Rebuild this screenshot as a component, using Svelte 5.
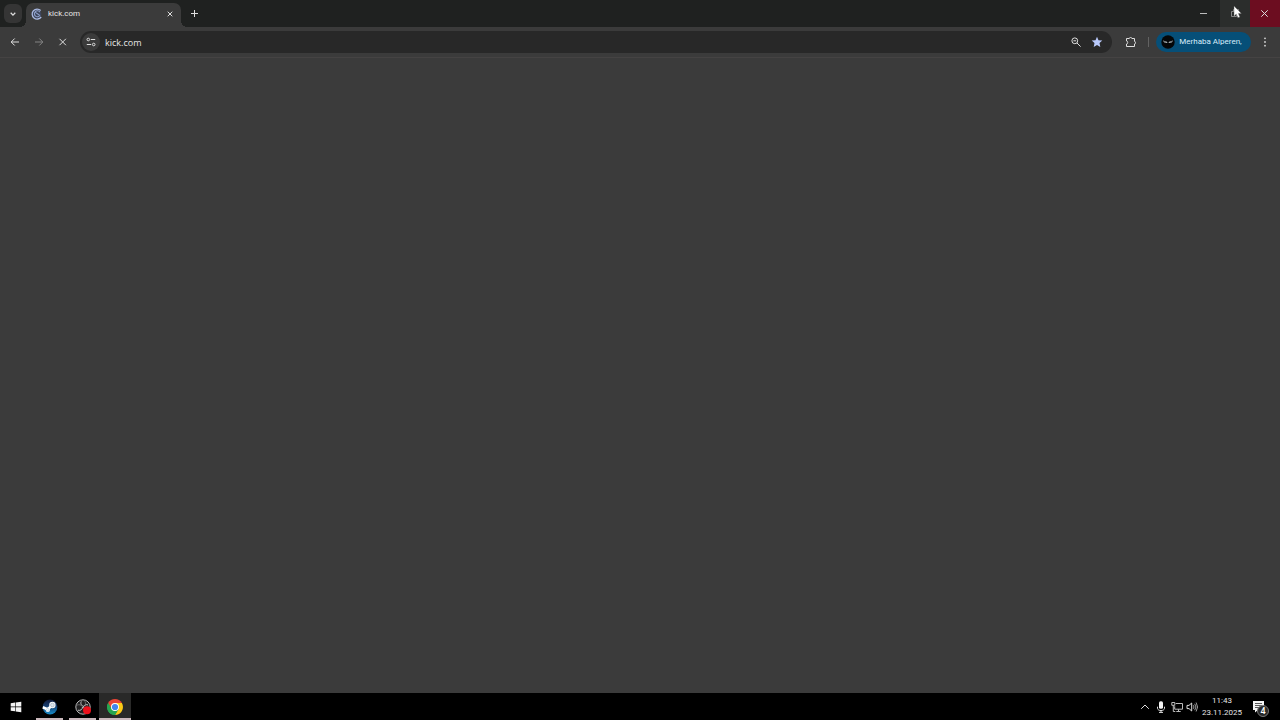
<script lang="ts">
  let address = $state('kick.com');
</script>

<div class="screen">
  <header class="titlebar">
    <button class="search-tabs" aria-label="Search tabs">
      <svg width="8" height="8" viewBox="0 0 8 8"><path d="M1.7 2.8 4 5.1 6.3 2.8" class="line bold" /></svg>
    </button>
    <div class="tab">
      <svg width="12" height="12" viewBox="0 0 12 12">
        <circle cx="6" cy="6" r="4.4" fill="#3c455c" />
        <path d="M10.2 9A5 5 0 1 1 9.7 2.5" fill="none" stroke="#a9b9e2" stroke-width="1.3" />
        <path d="M8.9 4.1A3 3 0 1 0 9 7.3M4.4 4.4 8.6 7.2" fill="none" stroke="#8fa0ca" stroke-width="1.1" />
      </svg>
      <span class="tab-title">kick.com</span>
      <button class="icon tab-close" aria-label="Close tab">
        <svg width="8" height="8" viewBox="0 0 8 8"><path d="m1.7 1.7 4.6 4.6m0-4.6L1.7 6.3" class="line" /></svg>
      </button>
    </div>
    <button class="icon new-tab" aria-label="New tab">
      <svg width="10" height="10" viewBox="0 0 10 10"><path d="M4.5 1v7M1 4.5h7" class="line" /></svg>
    </button>
    <div class="window-controls">
      <button class="minimize" aria-label="Minimize"><svg width="10" height="10" viewBox="0 0 10 10"><path d="M1 4.5h7" class="line soft" /></svg></button>
      <button class="restore" aria-label="Restore">
        <svg width="10" height="10" viewBox="0 0 10 10"><path d="M1.5 2.5h5v5h-5zM3.5 2.5v-2h5v5h-2" class="line dim" /></svg>
        <svg class="pointer" width="9" height="14" viewBox="0 0 9 14"><path d="M1 0v10.2l2.3-2.1 1.6 3.7 2-.9-1.6-3.5h3.1z" fill="#fff" stroke="#555" stroke-width=".4" /></svg>
      </button>
      <button class="close" aria-label="Close window"><svg width="10" height="10" viewBox="0 0 10 10"><path d="m1.3 1.3 6.4 6.4m0-6.4L1.3 7.7" class="line" /></svg></button>
    </div>
  </header>

  <nav class="toolbar" aria-label="Browser toolbar">
    <div class="navigation">
      <button class="icon" aria-label="Back"><svg width="12" height="12" viewBox="0 0 12 12"><path d="M10 6H2.3M5.7 2.5 2.2 6l3.5 3.5" class="line" /></svg></button>
      <button class="icon muted" aria-label="Forward"><svg width="12" height="12" viewBox="0 0 12 12"><path d="M2 6h7.7M6.3 2.5 9.8 6 6.3 9.5" class="line" /></svg></button>
      <button class="icon" aria-label="Stop loading"><svg width="12" height="12" viewBox="0 0 12 12"><path d="m2.5 2.8 6.4 6.4m0-6.4L2.5 9.2" class="line" /></svg></button>
    </div>
    <div class="omnibox">
      <button class="site-info" aria-label="View site information">
        <svg width="12" height="12" viewBox="0 0 12 12"><path d="M5.8 3.5h4.4M1.8 8.5h4.4" class="line" /><circle cx="3.3" cy="3.5" r="1.3" class="line" /><circle cx="8.7" cy="8.5" r="1.3" class="line" /></svg>
      </button>
      <input aria-label="Address" bind:value={address} />
      <button class="icon" aria-label="Zoom">
        <svg width="12" height="12" viewBox="0 0 12 12"><circle cx="4.8" cy="4.8" r="2.9" class="line" /><path d="m7 7 3.6 3.6M3.4 4.8h2.8" class="line" /></svg>
      </button>
      <button class="icon" aria-label="Edit bookmark">
        <svg width="12" height="12" viewBox="0 0 12 12"><path d="m6 .8 1.5 3.4 3.8.4-2.8 2.5.8 3.8L6 9l-3.3 1.9.8-3.8L.7 4.6l3.8-.4z" fill="#b9c9fb" /></svg>
      </button>
    </div>
    <button class="icon extensions" aria-label="Extensions">
      <svg width="14" height="14" viewBox="0 0 14 14"><path d="M2.5 3.5h2.8a1.3 1 0 0 1 2.6 0h2.6v2.9a1 1.3 0 0 1 0 2.6v2.5h-8V9a1.2 1.5 0 0 0 0-3z" class="line" /></svg>
    </button>
    <span class="divider"></span>
    <button class="profile">
      <svg width="14" height="14" viewBox="0 0 14 14"><circle cx="7" cy="7" r="6.7" fill="#050708" /><path d="m1.9 5.6 3.5 1 1.1.8h1l1.1-.8 3.5-1-1.4 1.9-2 .6-1.7-.5-1.7.5-2-.6z" fill="#b7c0c4" /><path d="m3 6.6 2.2.5m3.6 0 2.2-.5" stroke="#161b1e" stroke-width=".5" /></svg>
      <span>Merhaba Alperen,</span>
    </button>
    <button class="icon menu" aria-label="Browser menu">
      <svg width="12" height="12" viewBox="0 0 12 12" fill="#d6d6d6"><circle cx="6" cy="2.3" r=".9" /><circle cx="6" cy="6" r=".9" /><circle cx="6" cy="9.7" r=".9" /></svg>
    </button>
  </nav>

  <main></main>

  <footer class="taskbar">
    <button class="start" aria-label="Start">
      <svg width="12" height="12" viewBox="0 0 12 12" fill="#f4f4f4"><path d="m.7 2.2 4.4-.6v4H.7zM5.7 1.5l5.6-.8v4.9H5.7zM.7 6.3h4.4v4L.7 9.7zM5.7 6.3h5.6v4.9l-5.6-.8z" /></svg>
    </button>
    <button class="app" aria-label="Steam">
      <svg width="16" height="16" viewBox="0 0 16 16">
        <defs><linearGradient id="steam" x2="0" y2="1"><stop stop-color="#111b3b" /><stop offset=".45" stop-color="#173e70" /><stop offset="1" stop-color="#168dca" /></linearGradient></defs>
        <circle cx="8" cy="8" r="7.4" fill="url(#steam)" />
        <path d="m.8 8.3 5 2.1 3.4-3.4" fill="none" stroke="#fff" stroke-width="2.7" /><circle cx="10.4" cy="6" r="3.2" fill="#f5f7fa" /><circle cx="10.4" cy="6" r="1.8" fill="#dce5ed" stroke="#9aabbc" stroke-width=".6" /><circle cx="5.8" cy="10.8" r="2.2" fill="#fff" /><circle cx="5.8" cy="10.8" r="1.3" fill="none" stroke="#8fb4cc" stroke-width=".5" />
      </svg>
    </button>
    <button class="app" aria-label="OBS Studio">
      <svg width="18" height="18" viewBox="0 0 18 18">
        <circle cx="9" cy="9" r="7.2" fill="#202021" stroke="#b7b7b7" stroke-width="1" />
        <path d="M7.3 3.4c-1.2 2.3.2 4.5 2.6 5M14 6.9c-2.4-.9-4.6.6-4.8 3M4 12.2c2.4.7 4.5-.7 4.5-3.2" fill="none" stroke="#c4c4c4" stroke-width="1" />
        <path d="M3 7.1c2-.8 3.9-.3 5.2 1.3M10.8 3.2c1.2 1.7 1 3.6-.3 5.1" fill="none" stroke="#858585" stroke-width=".7" />
        <circle cx="13" cy="12.3" r="4" fill="#ed101b" />
      </svg>
    </button>
    <button class="app active" aria-label="Google Chrome">
      <svg width="16" height="16" viewBox="0 0 16 16">
        <path d="M8 8 1.1 4A8 8 0 0 1 14.9 4z" fill="#e94435" /><path d="M8 8 1.1 4A8 8 0 0 0 8 16l4-5z" fill="#27a650" /><path d="M8 4h6.9A8 8 0 0 1 8 16l3.5-6z" fill="#fbc916" /><path d="M1.1 4 4.6 10 8 8V4z" fill="#e94435" /><path d="M1.1 4 4.6 10 8 12l3.5-2L8 16A8 8 0 0 1 1.1 4" fill="#27a650" />
        <circle cx="8" cy="8" r="4" fill="#fff" /><circle cx="8" cy="8" r="3.1" fill="#4285ed" />
      </svg>
    </button>
    <div class="tray">
      <button class="icon" aria-label="Show hidden icons"><svg width="12" height="12" viewBox="0 0 12 12"><path d="m2.2 7.8 3.8-3.8 3.8 3.8" class="line" /></svg></button>
      <button class="icon" aria-label="Microphone"><svg width="12" height="12" viewBox="0 0 12 12"><rect x="4" y=".3" width="4" height="7.5" rx="1.6" fill="#f3f3f3" /><path d="M2.5 5.7v1.6c0 3 7 3 7 0V5.7M6 9.5v2M4 11.4h4" class="line" /></svg></button>
      <button class="icon" aria-label="Network"><svg width="12" height="12" viewBox="0 0 12 12"><path d="M4.7 2.5h6.8v5.7H3.7V5.3M7.5 8.2v2.2M5.3 10.5h4.4M.8 1.5h3v2.8h-3zM2.3 4.3v6.2h2" class="line soft" /></svg></button>
      <button class="icon volume" aria-label="Volume"><svg width="12" height="12" viewBox="0 0 12 12"><path d="M1 4.4h2L5.7 2v8L3 7.6H1z" class="line" /><path d="M7.3 4.2q1.4 1.8 0 3.6M8.7 2.8q2.5 3.2 0 6.4M10.1 1.5q3 4.5 0 9" class="line thin" /></svg></button>
    </div>
    <button class="clock"><time datetime="2025-11-23T11:43"><span>11:43</span><span>23.11.2025</span></time></button>
    <button class="notifications" aria-label="4 notifications">
      <svg width="14" height="14" viewBox="0 0 14 14"><path d="M1 1h11v9H6l-3 2.5V10H1z" fill="#f5f5f5" /><path d="M3 3.5h7M3 5.5h7M3 7.5h4" stroke="#333" stroke-width=".8" /></svg>
      <span class="badge">4</span>
    </button>
  </footer>
</div>

<style>
  :global(body) { margin: 0; background: #3b3b3b; }
  .screen { min-height: 100vh; display: flex; flex-direction: column; background: #3b3b3b; color: #e5e5e5; font-family: Roboto, "Open Sans", sans-serif; font-size: 8px; line-height: 12px; overflow: hidden; }
  button, input { margin: 0; padding: 0; border: 0; font: inherit; color: inherit; background: none; }
  button { display: flex; align-items: center; justify-content: center; flex: none; }
  svg { display: block; flex: none; }
  .line { fill: none; stroke: #dedede; stroke-width: 1; }
  .bold { stroke-width: 1.3; }
  .thin { stroke-width: .7; }
  .dim { stroke: #888; }
  .soft { stroke: #bcbcbc; }
  .icon { width: 16px; height: 16px; }
  .muted { opacity: .45; }

  .titlebar { height: 27px; display: flex; align-items: center; background: #1f2120; }
  .search-tabs { width: 18px; height: 19px; margin-left: 4px; border-radius: 6px; background: #353535; }
  .tab { position: relative; align-self: flex-end; box-sizing: border-box; width: 155px; height: 24px; margin-left: 4px; padding: 0 4px 2px 5px; display: flex; align-items: center; gap: 5px; background: #3b3b3b; border-radius: 7px 7px 0 0; }
  .tab::before, .tab::after { content: ""; position: absolute; bottom: 0; width: 6px; height: 6px; }
  .tab::before { right: 100%; background: radial-gradient(circle at 0 0, transparent 6px, #3b3b3b 6px); }
  .tab::after { left: 100%; background: radial-gradient(circle at 100% 0, transparent 6px, #3b3b3b 6px); }
  .tab-title { flex: 1; }
  .tab-close { width: 14px; }
  .new-tab { margin-left: 6px; }
  .window-controls { display: flex; align-self: stretch; margin-left: auto; }
  .window-controls button { width: 30px; }
  .window-controls .minimize { width: 32px; }
  .window-controls .restore { position: relative; background: #2b2d2c; }
  .pointer { position: absolute; left: 13px; top: 6px; }
  .window-controls .close { background: #6c0d20; }

  .toolbar { box-sizing: border-box; height: 31px; padding: 0 7px; display: flex; align-items: center; background: #3b3b3b; border-bottom: 1px solid #454343; }
  .navigation { display: flex; gap: 8px; }
  .omnibox { flex: 1; min-width: 0; box-sizing: border-box; height: 22px; margin-left: 9px; padding: 0 7px 0 2px; display: flex; align-items: center; gap: 5px; border-radius: 11px; background: #282828; }
  .site-info { width: 18px; height: 18px; border-radius: 50%; background: #3b3b3b; }
  input { flex: 1; min-width: 0; height: 18px; font-family: "Open Sans", "Noto Sans", sans-serif; font-size: 9px; outline: 0; }
  .extensions { margin-left: 11px; }
  .divider { width: 1px; height: 10px; margin: 0 7px 0 9px; background: #626262; }
  .profile { min-width: 95px; height: 20px; padding: 0 9px 0 5px; gap: 4px; border-radius: 10px; background: #064f78; color: #d6edfb; white-space: nowrap; }
  .menu { margin-left: 6px; }
  main { flex: 1; }

  .taskbar { height: 27px; display: flex; align-items: center; background: #000; }
  .start { width: 32px; height: 27px; }
  .app { box-sizing: border-box; width: 27px; height: 27px; margin-left: 3px; margin-right: 3px; border-bottom: 2px solid #cbb9bd; padding-top: 2px; }
  .start + .app { margin-left: 4px; }
  .app.active { width: 32px; margin-left: 0; background: #292928; }
  .tray { display: flex; margin-left: auto; }
  .tray .volume { width: 14px; }
  .clock { width: 46px; text-align: center; }
  .clock span { display: block; }
  .notifications { position: relative; width: 35px; height: 27px; padding-right: 8px; box-sizing: border-box; }
  .badge { position: absolute; left: 12px; top: 12px; width: 10px; height: 10px; border: 1px solid #777; border-radius: 50%; background: #292929; font-size: 9px; font-weight: 500; line-height: 10px; text-align: center; color: #fff; }
</style>
